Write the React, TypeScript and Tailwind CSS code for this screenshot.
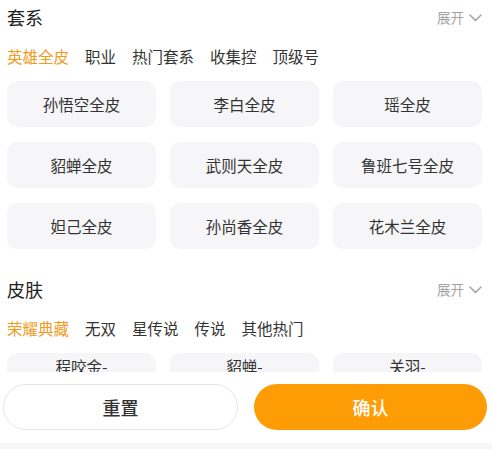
const font = '"Noto Sans CJK SC", "Noto Sans", sans-serif'

interface SectionProps {
  title: string
  tabs: string[]
  items: string[][]
  className?: string
}

function Chevron() {
  return (
    <svg width="13" height="8" viewBox="0 0 13 8" fill="none" className="ml-[5px]">
      <polyline
        points="1,1 6.5,6.5 12,1"
        stroke="#a3a3a3"
        strokeWidth="1.5"
        strokeLinecap="round"
        strokeLinejoin="round"
      />
    </svg>
  )
}

function Section({ title, tabs, items, className = '' }: SectionProps) {
  return (
    <section className={className}>
      <div className="flex h-[35px] items-center justify-between">
        <h2 className="text-[18px] text-[#222]">{title}</h2>
        <button className="flex items-center text-[13.5px] text-[#a3a3a3]">
          展开
          <Chevron />
        </button>
      </div>
      <div className="flex h-[44px] items-center gap-[16px] text-[15.5px]">
        {tabs.map((tab, i) => (
          <span
            key={tab}
            className={i === 0 ? 'text-[#f29a1c]' : 'text-[#333]'}
          >
            {tab}
          </span>
        ))}
      </div>
      <div className="mt-[2px] grid grid-cols-3 gap-x-[14px] gap-y-[15px]">
        {items.map((lines) => (
          <div
            key={lines.join('')}
            className="flex h-[46px] flex-col items-center justify-center rounded-[10px] bg-[#f6f6f8] text-[15.5px] leading-[20px] text-[#333]"
          >
            {lines.map((line) => (
              <span key={line}>{line}</span>
            ))}
          </div>
        ))}
      </div>
    </section>
  )
}

export default function App() {
  return (
    <div
      className="flex h-[449px] w-full flex-col overflow-hidden bg-white"
      style={{ fontFamily: font }}
    >
      <div className="flex-1 overflow-hidden pl-[7px] pr-[10px]">
        <Section
          title="套系"
          tabs={['英雄全皮', '职业', '热门套系', '收集控', '顶级号']}
          items={[
            ['孙悟空全皮'],
            ['李白全皮'],
            ['瑶全皮'],
            ['貂蝉全皮'],
            ['武则天全皮'],
            ['鲁班七号全皮'],
            ['妲己全皮'],
            ['孙尚香全皮'],
            ['花木兰全皮'],
          ]}
        />
        <Section
          className="mt-[23px]"
          title="皮肤"
          tabs={['荣耀典藏', '无双', '星传说', '传说', '其他热门']}
          items={[
            ['程咬金-', '功夫厨神'],
            ['貂蝉-', '仲夏夜之梦'],
            ['关羽-', '天启骑士'],
          ]}
        />
      </div>
      <div className="flex h-[71px] shrink-0 gap-[16px] bg-white pl-[3px] pr-[5px] pt-[12px]">
        <button className="h-[46px] flex-1 rounded-full border border-[#e6e6e6] bg-white text-[18px] font-medium text-[#333]">
          重置
        </button>
        <button className="h-[46px] flex-1 rounded-full bg-[#fd9c04] text-[18px] font-medium text-white">
          确认
        </button>
      </div>
      <div className="h-[6px] shrink-0 bg-[#f6f6f6]" />
    </div>
  )
}
